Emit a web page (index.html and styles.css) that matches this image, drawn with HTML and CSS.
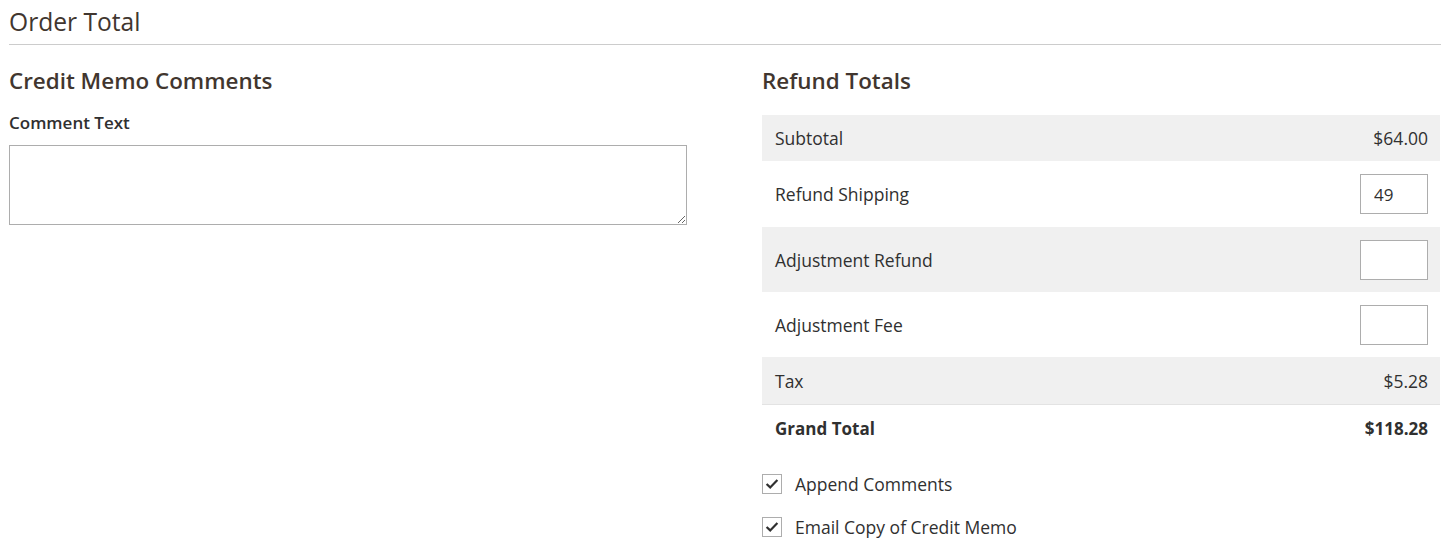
FILE: index.html
```html
<!DOCTYPE html>
<html lang="en">
  <head>
    <meta charset="UTF-8" />
    <title>Order Total</title>
    <link rel="stylesheet" href="styles.css">
  </head>
  <body>
    <div class="page">
      <div class="section-title">Order Total</div>

      <div class="columns">
        <div class="col">
          <h2 class="col-title">Credit Memo Comments</h2>
          <label class="field-label" for="comment">Comment Text</label>
          <textarea id="comment" class="comment-box"></textarea>
        </div>

        <div class="col">
          <h2 class="col-title">Refund Totals</h2>
          <table class="totals">
            <tr class="shade">
              <td>Subtotal</td>
              <td class="amount">$64.00</td>
            </tr>
            <tr class="tall first-tall">
              <td>Refund Shipping</td>
              <td class="amount"><input type="text" class="small-input" value="49"></td>
            </tr>
            <tr class="shade tall">
              <td>Adjustment Refund</td>
              <td class="amount"><input type="text" class="small-input"></td>
            </tr>
            <tr class="tall">
              <td>Adjustment Fee</td>
              <td class="amount"><input type="text" class="small-input"></td>
            </tr>
            <tr class="shade last-shade">
              <td>Tax</td>
              <td class="amount">$5.28</td>
            </tr>
            <tr class="grand">
              <td>Grand Total</td>
              <td class="amount">$118.28</td>
            </tr>
          </table>

          <div class="checks">
            <label class="check">
              <span class="box">
                <svg width="14" height="12" viewBox="0 0 14 12"><path d="M1.6 6 L5.2 9.4 L12.4 2" fill="none" stroke="#303030" stroke-width="2.2"/></svg>
              </span>
              Append Comments
            </label>
            <label class="check">
              <span class="box">
                <svg width="14" height="12" viewBox="0 0 14 12"><path d="M1.6 6 L5.2 9.4 L12.4 2" fill="none" stroke="#303030" stroke-width="2.2"/></svg>
              </span>
              Email Copy of Credit Memo
            </label>
          </div>
        </div>
      </div>
    </div>
  </body>
</html>
```

FILE: styles.css
```css
body {
  margin: 0;
  background: #ffffff;
  font-family: "Open Sans", "Liberation Sans", sans-serif;
  color: #303030;
}

.page {
  padding: 0 3px 0 9px;
}

.section-title {
  font-size: 24.6px;
  color: #41362f;
  line-height: 44px;
  border-bottom: 1px solid #cccccc;
}

.columns {
  display: grid;
  grid-template-columns: 678px 678px;
  column-gap: 75px;
}

.col-title {
  font-size: 22.4px;
  font-weight: 600;
  color: #41362f;
  margin: 20px 0 0;
  line-height: 31px;
}

.field-label {
  display: block;
  font-size: 17px;
  font-weight: 600;
  color: #303030;
  margin-top: 16px;
  line-height: 22px;
}

.comment-box {
  display: block;
  box-sizing: border-box;
  width: 678px;
  height: 80px;
  margin-top: 11px;
  border: 1px solid #adadad;
  padding: 8px;
  font-family: inherit;
  font-size: 14px;
}

.totals {
  width: 100%;
  border-collapse: collapse;
  margin-top: 19px;
  font-size: 17.5px;
}

.totals td {
  height: 46px;
  padding: 0 12px 0 13px;
  vertical-align: middle;
}

.totals tr.tall td {
  height: 65px;
}

.totals tr.first-tall td {
  height: 66px;
}

.totals tr.shade td {
  background: #f0f0f0;
}

.totals tr.last-shade td {
  height: 47px;
}

.totals tr.grand td {
  font-size: 17px;
  font-weight: 700;
  border-top: 1px solid #e3e3e3;
  height: 47px;
}

.amount {
  text-align: right;
}

.small-input {
  box-sizing: border-box;
  width: 68px;
  height: 40px;
  border: 1px solid #adadad;
  padding: 0 10px 0 13px;
  font-family: inherit;
  font-size: 17px;
  color: #303030;
  vertical-align: middle;
}

.checks {
  margin-top: 21px;
}

.check {
  display: flex;
  align-items: center;
  height: 22px;
  margin-bottom: 21px;
  font-size: 17.5px;
  color: #303030;
}

.box {
  box-sizing: border-box;
  width: 20px;
  height: 20px;
  border: 1px solid #adadad;
  display: inline-flex;
  align-items: center;
  justify-content: center;
  margin-right: 13px;
}
```
